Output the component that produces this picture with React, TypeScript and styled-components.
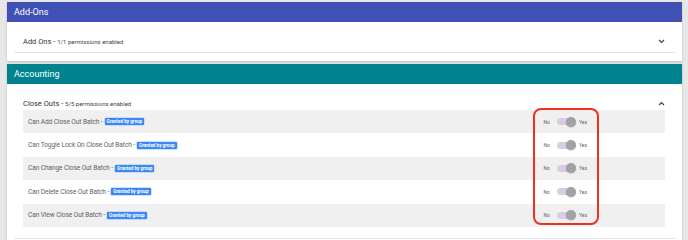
import React from 'react';
import styled, { createGlobalStyle } from 'styled-components';

const GlobalStyle = createGlobalStyle`
  html, body {
    margin: 0;
    padding: 0;
    background: #e7e7e7;
    font-family: Roboto, 'Liberation Sans', sans-serif;
    overflow: hidden;
  }
`;

const Page = styled.div`
  display: flex;
  flex-direction: column;
  gap: 3px;
  padding: 2px 6px 0 7px;
  height: 240px;
  box-sizing: border-box;
`;

const Card = styled.section`
  background: #fff;
  box-shadow: 0 1px 2px rgba(0, 0, 0, 0.2);
`;

const CardHeader = styled.header<{ $color: string }>`
  height: 20px;
  display: flex;
  align-items: center;
  padding-left: 7px;
  background: ${(p) => p.$color};
  color: #fff;
  font-size: 9px;
`;

const CardBody = styled.div`
  padding: 0 6px 8px 7px;
`;

const Section = styled.div<{ $open?: boolean }>`
  padding-bottom: ${(p) => (p.$open ? 0 : 5)}px;
  border-bottom: 1px solid #e4e4e4;
`;

const SectionHead = styled.div`
  display: flex;
  align-items: center;
  justify-content: space-between;
  height: 12px;
  padding: 13px 11px 0 9px;
`;

const Title = styled.div`
  font-size: 7.5px;
  color: #333;
`;

const Sub = styled.span`
  font-size: 6px;
  color: #444;
`;

const Rows = styled.div`
  position: relative;
  margin: 1px 11px 11px 9px;
`;

const Row = styled.div<{ $shade: boolean }>`
  height: 23.4px;
  display: flex;
  align-items: center;
  padding-left: 5px;
  background: ${(p) => (p.$shade ? '#f0f0f0' : '#fff')};
`;

const Label = styled.div`
  flex: 1;
  display: flex;
  align-items: center;
  gap: 2px;
  font-size: 6.6px;
  letter-spacing: -0.1px;
  color: #5f5f5f;
`;

const Badge = styled.span`
  background: #3b87f5;
  color: #fff;
  font-size: 4.6px;
  font-weight: 700;
  letter-spacing: 0;
  padding: 1px 2px;
  border-radius: 1px;
  box-shadow: 0 0 0 0.5px #9cc3fb;
`;

const Toggle = styled.div`
  display: flex;
  align-items: center;
  margin-right: 78px;
  font-size: 5px;
  color: #666;
`;

const Track = styled.span`
  position: relative;
  display: inline-block;
  width: 17px;
  height: 7px;
  margin: 0 5px 0 7px;
  border-radius: 4px;
  background: #dccbe4;
`;

const Thumb = styled.span`
  position: absolute;
  right: -2px;
  top: -1.5px;
  width: 10px;
  height: 10px;
  border-radius: 50%;
  background: #a3a3a3;
  box-shadow: 0 0.5px 1px rgba(0, 0, 0, 0.3);
`;

const Highlight = styled.div`
  position: absolute;
  left: 510px;
  width: 66px;
  top: -2px;
  bottom: 2px;
  box-sizing: border-box;
  border: 2px solid #ef2f22;
  border-radius: 8px;
  pointer-events: none;
`;

function Chevron({ up = false }: { up?: boolean }) {
  return (
    <svg width="7" height="5" viewBox="0 0 7 5">
      <polyline
        points={up ? '1,4 3.5,1.5 6,4' : '1,1 3.5,3.5 6,1'}
        fill="none"
        stroke="#444"
        strokeWidth="1.2"
      />
    </svg>
  );
}

const permissions = [
  'Can Add Close Out Batch',
  'Can Toggle Lock On Close Out Batch',
  'Can Change Close Out Batch',
  'Can Delete Close Out Batch',
  'Can View Close Out Batch',
];

function App() {
  return (
    <>
      <GlobalStyle />
      <Page>
        <Card>
          <CardHeader $color="#3f51b5">Add-Ons</CardHeader>
          <CardBody>
            <Section>
              <SectionHead>
                <Title>
                  Add Ons - <Sub>1/1 permissions enabled</Sub>
                </Title>
                <Chevron />
              </SectionHead>
            </Section>
          </CardBody>
        </Card>
        <Card>
          <CardHeader $color="#00838f">Accounting</CardHeader>
          <CardBody>
            <Section $open>
              <SectionHead>
                <Title>
                  Close Outs - <Sub>5/5 permissions enabled</Sub>
                </Title>
                <Chevron up />
              </SectionHead>
              <Rows>
                {permissions.map((name, i) => (
                  <Row key={name} $shade={i % 2 === 0}>
                    <Label>
                      {name} -<Badge>Granted by group</Badge>
                    </Label>
                    <Toggle>
                      No
                      <Track>
                        <Thumb />
                      </Track>
                      Yes
                    </Toggle>
                  </Row>
                ))}
                <Highlight />
              </Rows>
            </Section>
          </CardBody>
        </Card>
      </Page>
    </>
  );
}

export default App;
